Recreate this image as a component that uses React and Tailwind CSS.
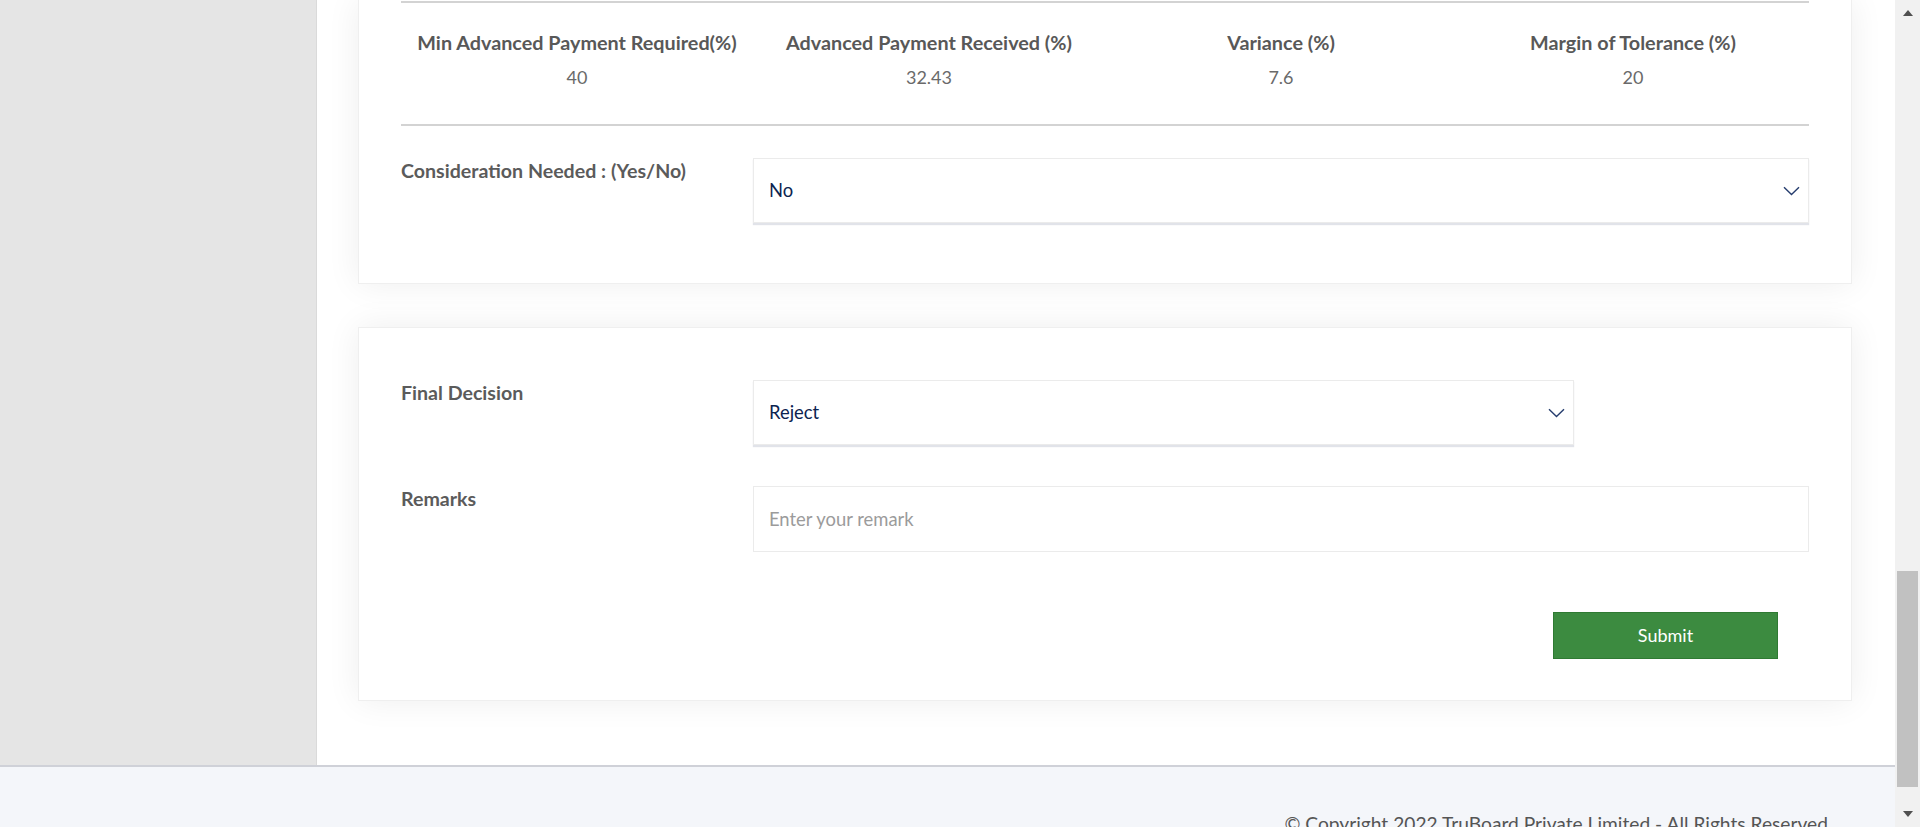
import React from 'react';

const stats = [
    { label: 'Min Advanced Payment Required(%)', value: '40' },
    { label: 'Advanced Payment Received (%)', value: '32.43' },
    { label: 'Variance (%)', value: '7.6' },
    { label: 'Margin of Tolerance (%)', value: '20' },
];

const Chevron = () => (
    <svg width="17" height="10" viewBox="0 0 17 10" fill="none">
        <path d="M1 1.2 L8.5 8.6 L16 1.2" stroke="#263d6e" strokeWidth="1.4" />
    </svg>
);

// Fake select box, matches the flat look of the original form
const SelectBox = ({ value }) => (
    <div className="flex h-[65px] items-center justify-between border border-[#ebebeb] bg-white pl-[15px] pr-[8px] shadow-[0_2px_1px_rgba(40,60,100,0.14)]">
        <span className="text-[18.4px] text-[#0c2350]">{value}</span>
        <Chevron />
    </div>
);

const App = () => {
    return (
        <div className="flex h-[827px] overflow-hidden bg-white font-['Lato','Open_Sans',sans-serif]">
            <div className="flex min-w-0 flex-1 flex-col">
                <div className="flex h-[765px] shrink-0">
                    {/* Sidebar */}
                    <aside className="w-[317px] shrink-0 border-r border-[#dadada] bg-[#e5e5e5]" />

                    {/* Main content */}
                    <main className="flex-1 pl-[41px] pr-[43px]">
                        {/* Advance payment card */}
                        <section className="border border-t-0 border-[#efefef] bg-white px-[42px] pt-px pb-[60px] shadow-[0_0_32px_rgba(0,0,0,0.07)]">
                            <div className="h-[2px] bg-[#d3d3d3]" />
                            <div className="mt-[26px] grid grid-cols-4 text-center">
                                {stats.map((s) => (
                                    <div key={s.label}>
                                        <p className="text-[19.8px] leading-[26px] font-bold text-[#585858]">{s.label}</p>
                                        <p className="mt-[9px] text-[18px] leading-[26px] text-[#6a6a6a]">{s.value}</p>
                                    </div>
                                ))}
                            </div>
                            <div className="mt-[34px] h-[2px] bg-[#d3d3d3]" />
                            <div className="mt-[32px] grid grid-cols-12 items-start">
                                <label className="col-span-3 pt-px text-[19.6px] leading-[24px] font-bold text-[#5b5b5b]">
                                    Consideration Needed : (Yes/No)
                                </label>
                                <div className="col-span-9">
                                    <SelectBox value="No" />
                                </div>
                            </div>
                        </section>

                        {/* Decision card */}
                        <section className="mt-[43px] border border-[#efefef] bg-white px-[42px] pt-[52px] pb-[41px] shadow-[0_0_32px_rgba(0,0,0,0.07)]">
                            <div className="grid grid-cols-12 items-start">
                                <label className="col-span-3 pt-px text-[19.6px] leading-[24px] font-bold text-[#5b5b5b]">Final Decision</label>
                                <div className="col-span-7">
                                    <SelectBox value="Reject" />
                                </div>
                            </div>
                            <div className="mt-[41px] grid grid-cols-12 items-start">
                                <label className="col-span-3 pt-px text-[19.6px] leading-[24px] font-bold text-[#5b5b5b]">Remarks</label>
                                <div className="col-span-9">
                                    <input
                                        type="text"
                                        placeholder="Enter your remark"
                                        className="block h-[66px] w-full border border-[#ebebeb] bg-white pl-[15px] text-[18.4px] text-[#0c2350] outline-none placeholder:text-[#9b9b9b]"
                                    />
                                </div>
                            </div>
                            <div className="mt-[60px] flex justify-end pr-[31px]">
                                <button
                                    type="button"
                                    className="h-[47px] w-[225px] border border-[#2f7a33] bg-[#3c8b40] text-[18px] text-white"
                                >
                                    Submit
                                </button>
                            </div>
                        </section>
                    </main>
                </div>

                {/* Footer */}
                <footer className="flex-1 border-t-2 border-[#cfd1d8] bg-[#f4f6fa] pt-[44px] pr-[67px] text-right">
                    <p className="text-[19.2px] leading-[26px] text-[#555]">
                        © Copyright 2022 TruBoard Private Limited - All Rights Reserved
                    </p>
                </footer>
            </div>

            {/* Scrollbar */}
            <div className="flex w-[25px] shrink-0 flex-col items-center bg-[#f1f1f1]">
                <div className="mt-[10px] h-0 w-0 border-x-[5px] border-b-[6px] border-x-transparent border-b-[#505050]" />
                <div className="mt-[555px] h-[216px] w-[21px] bg-[#c1c1c1]" />
                <div className="mt-[24px] h-0 w-0 border-x-[5px] border-t-[6px] border-x-transparent border-t-[#505050]" />
            </div>
        </div>
    );
};

export default App;
